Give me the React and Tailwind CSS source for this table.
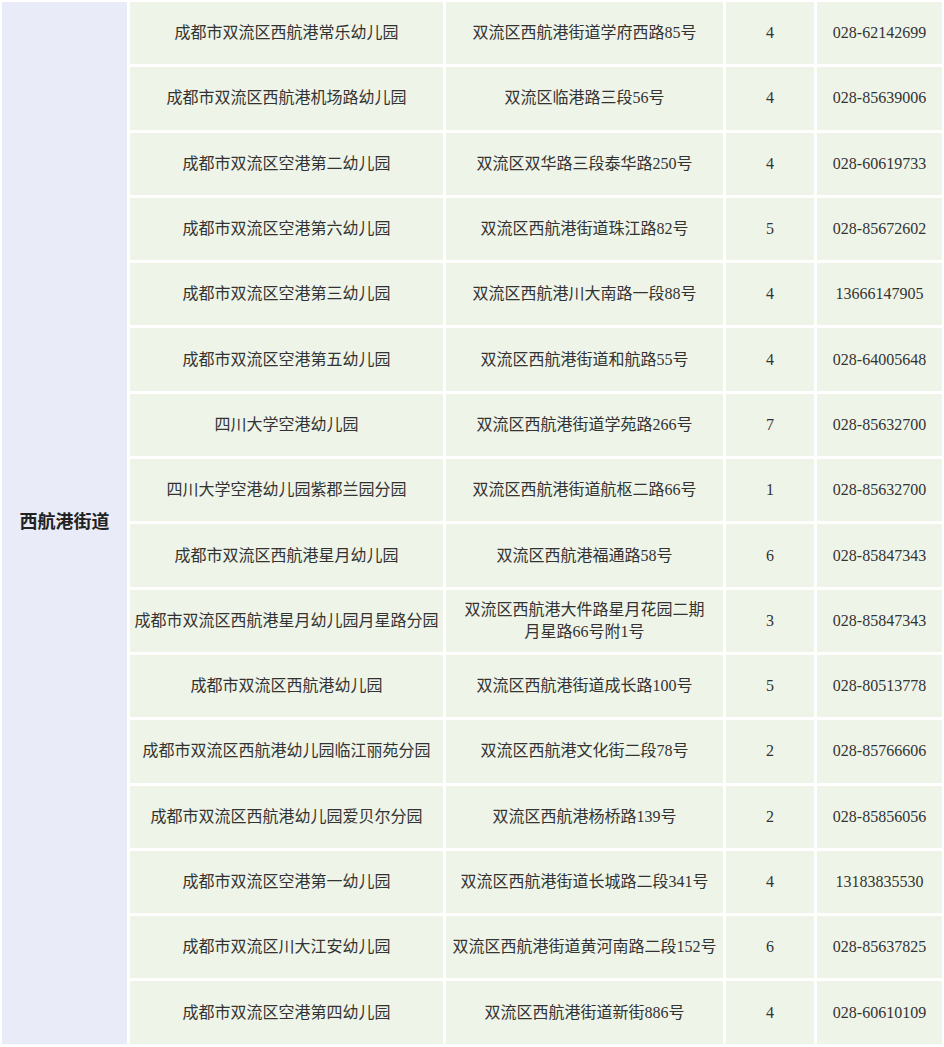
const rows = [
  ["成都市双流区西航港常乐幼儿园", "双流区西航港街道学府西路85号", "4", "028-62142699"],
  ["成都市双流区西航港机场路幼儿园", "双流区临港路三段56号", "4", "028-85639006"],
  ["成都市双流区空港第二幼儿园", "双流区双华路三段泰华路250号", "4", "028-60619733"],
  ["成都市双流区空港第六幼儿园", "双流区西航港街道珠江路82号", "5", "028-85672602"],
  ["成都市双流区空港第三幼儿园", "双流区西航港川大南路一段88号", "4", "13666147905"],
  ["成都市双流区空港第五幼儿园", "双流区西航港街道和航路55号", "4", "028-64005648"],
  ["四川大学空港幼儿园", "双流区西航港街道学苑路266号", "7", "028-85632700"],
  ["四川大学空港幼儿园紫郡兰园分园", "双流区西航港街道航枢二路66号", "1", "028-85632700"],
  ["成都市双流区西航港星月幼儿园", "双流区西航港福通路58号", "6", "028-85847343"],
  ["成都市双流区西航港星月幼儿园月星路分园", ["双流区西航港大件路星月花园二期", "月星路66号附1号"], "3", "028-85847343"],
  ["成都市双流区西航港幼儿园", "双流区西航港街道成长路100号", "5", "028-80513778"],
  ["成都市双流区西航港幼儿园临江丽苑分园", "双流区西航港文化街二段78号", "2", "028-85766606"],
  ["成都市双流区西航港幼儿园爱贝尔分园", "双流区西航港杨桥路139号", "2", "028-85856056"],
  ["成都市双流区空港第一幼儿园", "双流区西航港街道长城路二段341号", "4", "13183835530"],
  ["成都市双流区川大江安幼儿园", "双流区西航港街道黄河南路二段152号", "6", "028-85637825"],
  ["成都市双流区空港第四幼儿园", "双流区西航港街道新街886号", "4", "028-60610109"],
];

const cell =
  "bg-[#eef5e8] flex items-center justify-center text-center text-[16px] leading-[22px] text-[#333] whitespace-nowrap";

export default function App() {
  return (
    <div
      className="bg-white w-[944px] h-[1047px] p-[2px]"
      style={{ fontFamily: '"Liberation Serif", "Noto Sans CJK SC", serif' }}
    >
      <div className="grid grid-cols-[125px_313px_277px_88px_125px] grid-rows-[repeat(16,62.3px)] gap-[3px]">
        <div className="row-span-16 row-start-1 col-start-1 bg-[#e9ecf8] flex items-center justify-center text-[18px] font-bold text-[#222]">
          西航港街道
        </div>
        {rows.map((r, i) => (
          <div key={i} className="contents">
            <div className={cell}>{r[0]}</div>
            <div className={cell}>
              {Array.isArray(r[1]) ? (
                <span>
                  {r[1][0]}
                  <br />
                  {r[1][1]}
                </span>
              ) : (
                r[1]
              )}
            </div>
            <div className={cell}>{r[2]}</div>
            <div className={cell}>{r[3]}</div>
          </div>
        ))}
      </div>
    </div>
  );
}
